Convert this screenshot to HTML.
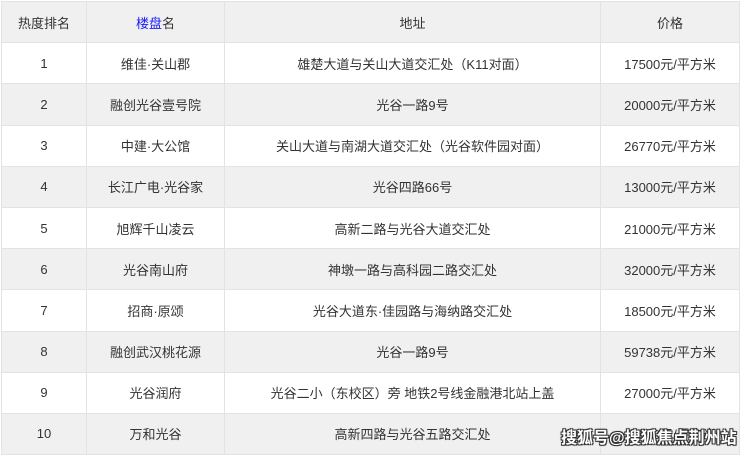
<!DOCTYPE html>
<html><head><meta charset="utf-8"><style>
body{margin:0;background:#fff;width:740px;height:457px;overflow:hidden;position:relative;font-family:"Liberation Sans","Noto Sans CJK SC",sans-serif;font-size:13px;color:#333}
table{position:absolute;left:1px;top:1px;border-collapse:collapse;table-layout:fixed;width:738px}
tr{height:41.2px}
td{border:1px solid #e3e3e3;text-align:center;padding:0}
tr:nth-child(odd) td{background:#f0f0f0}
tr:nth-child(even) td{background:#fff}
.b{color:#1a1aff}
.wm{position:absolute;left:561px;top:429px;font-size:16px;font-weight:bold;color:#fff;white-space:nowrap;line-height:20px;text-shadow:-1px -1px 0 #333,1px -1px 0 #333,-1px 1px 0 #333,1px 1px 0 #333,0 0 2px #000}
</style></head><body>
<table>
<colgroup><col style="width:85px"><col style="width:138px"><col style="width:376px"><col style="width:139px"></colgroup>
<tr><td>热度排名</td><td><span class="b">楼盘</span>名</td><td>地址</td><td>价格</td></tr>
<tr><td>1</td><td>维佳·关山郡</td><td>雄楚大道与关山大道交汇处（K11对面）</td><td>17500元/平方米</td></tr>
<tr><td>2</td><td>融创光谷壹号院</td><td>光谷一路9号</td><td>20000元/平方米</td></tr>
<tr><td>3</td><td>中建·大公馆</td><td>关山大道与南湖大道交汇处（光谷软件园对面）</td><td>26770元/平方米</td></tr>
<tr><td>4</td><td>长江广电·光谷家</td><td>光谷四路66号</td><td>13000元/平方米</td></tr>
<tr><td>5</td><td>旭辉千山凌云</td><td>高新二路与光谷大道交汇处</td><td>21000元/平方米</td></tr>
<tr><td>6</td><td>光谷南山府</td><td>神墩一路与高科园二路交汇处</td><td>32000元/平方米</td></tr>
<tr><td>7</td><td>招商·原颂</td><td>光谷大道东·佳园路与海纳路交汇处</td><td>18500元/平方米</td></tr>
<tr><td>8</td><td>融创武汉桃花源</td><td>光谷一路9号</td><td>59738元/平方米</td></tr>
<tr><td>9</td><td>光谷润府</td><td>光谷二小（东校区）旁 地铁2号线金融港北站上盖</td><td>27000元/平方米</td></tr>
<tr><td>10</td><td>万和光谷</td><td>高新四路与光谷五路交汇处</td><td>16900元/平方米</td></tr>
</table>
<div class="wm">搜狐号@搜狐焦点荆州站</div>
</body></html>
